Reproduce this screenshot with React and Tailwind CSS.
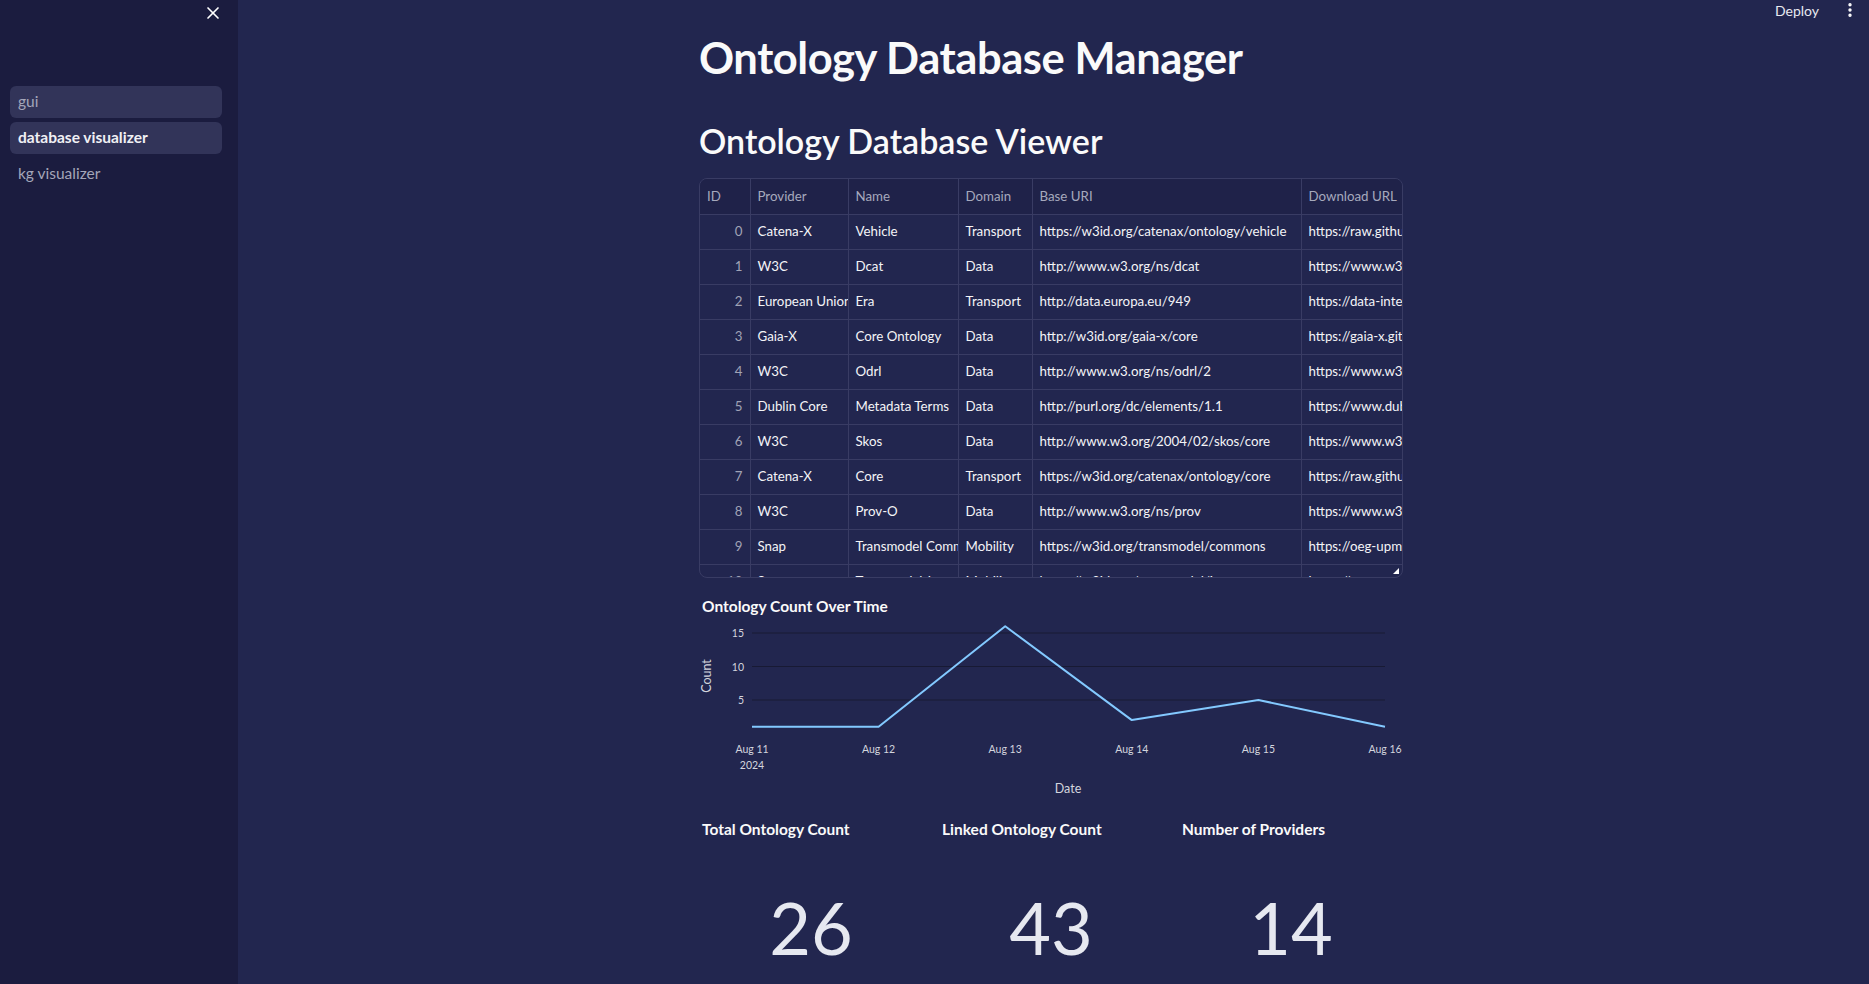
import { X, EllipsisVertical } from 'lucide-react'

const ROWS = [
  ['0', 'Catena-X', 'Vehicle', 'Transport', 'https://w3id.org/catenax/ontology/vehicle', 'https://raw.githubusercontent.com/catenax-eV/'],
  ['1', 'W3C', 'Dcat', 'Data', 'http://www.w3.org/ns/dcat', 'https://www.w3.org/ns/dcat3.ttl'],
  ['2', 'European Union', 'Era', 'Transport', 'http://data.europa.eu/949', 'https://data-interop.era.europa.eu/'],
  ['3', 'Gaia-X', 'Core Ontology', 'Data', 'http://w3id.org/gaia-x/core', 'https://gaia-x.gitlab.io/technical'],
  ['4', 'W3C', 'Odrl', 'Data', 'http://www.w3.org/ns/odrl/2', 'https://www.w3.org/ns/odrl/2/ODRL22.ttl'],
  ['5', 'Dublin Core', 'Metadata Terms', 'Data', 'http://purl.org/dc/elements/1.1', 'https://www.dublincore.org/specifications'],
  ['6', 'W3C', 'Skos', 'Data', 'http://www.w3.org/2004/02/skos/core', 'https://www.w3.org/2009/08/skos-reference'],
  ['7', 'Catena-X', 'Core', 'Transport', 'https://w3id.org/catenax/ontology/core', 'https://raw.githubusercontent.com/catenax-eV/'],
  ['8', 'W3C', 'Prov-O', 'Data', 'http://www.w3.org/ns/prov', 'https://www.w3.org/ns/prov-o'],
  ['9', 'Snap', 'Transmodel Commons', 'Mobility', 'https://w3id.org/transmodel/commons', 'https://oeg-upm.github.io/transmodel'],
  ['10', 'Snap', 'Transmodel Journeys', 'Mobility', 'https://w3id.org/transmodel/journeys', 'https://oeg-upm.github.io/transmodel'],
]

const COLS = ['ID', 'Provider', 'Name', 'Domain', 'Base URI', 'Download URL']
const WIDTHS = ['w-[50px]', 'w-[98px]', 'w-[110px]', 'w-[74px]', 'w-[269px]', 'w-[300px]']

const COUNTS = [1, 1, 16, 2, 5, 1]
const DAYS = ['Aug 11', 'Aug 12', 'Aug 13', 'Aug 14', 'Aug 15', 'Aug 16']

const font = "font-['Lato','Noto_Sans',sans-serif]"

// y axis: 0 sits at 114.5, 6.7px per unit; x: 53 → 686
const yOf = v => 114.5 - v * 6.7

function Chart() {
  const xs = COUNTS.map((_, i) => 53 + i * 126.6)
  const pts = xs.map((x, i) => `${x},${yOf(COUNTS[i])}`).join(' ')
  return (
    <svg width="704" height="180" viewBox="0 0 704 180" className="block">
      {[15, 10, 5].map(v => (
        <g key={v}>
          <line x1="53" x2="686" y1={yOf(v)} y2={yOf(v)} stroke="#181a34" strokeWidth="1" />
          <text x="45" y={yOf(v) + 4} textAnchor="end" fontSize="10.5" fill="#d3d5de">{v}</text>
        </g>
      ))}
      <polyline points={pts} fill="none" stroke="#83c9ff" strokeWidth="2" strokeLinejoin="round" />
      {DAYS.map((d, i) => (
        <text key={d} x={xs[i]} y="134" textAnchor="middle" fontSize="10.5" fill="#d3d5de">{d}</text>
      ))}
      <text x="53" y="150" textAnchor="middle" fontSize="10.5" fill="#d3d5de">2024</text>
      <text x="369" y="174" textAnchor="middle" fontSize="12.5" fill="#d3d5de">Date</text>
      <text x="0" y="0" transform="translate(12 57) rotate(-90)" textAnchor="middle" fontSize="12.5" fill="#d3d5de">Count</text>
    </svg>
  )
}

export default function App() {
  return (
    <div className={`flex h-[984px] w-full overflow-hidden bg-[#22264f] text-[#fafafa] ${font}`}>
      {/* sidebar */}
      <aside className="relative w-[238px] shrink-0 bg-[#1b1c3f]">
        <button className="absolute right-[15px] top-[3px] text-white">
          <X size={20} strokeWidth={2} />
        </button>
        <nav className="flex flex-col gap-[4px] pl-[10px] pr-[16px] pt-[86px]">
          <div className="flex h-[32px] items-center rounded-md bg-[#323459] px-[8px] text-[15.5px] text-[#a4a6b9]">gui</div>
          <div className="flex h-[32px] items-center rounded-md bg-[#323459] px-[8px] text-[15.5px] font-bold text-[#f0f0f4]">database visualizer</div>
          <div className="flex h-[32px] items-center px-[8px] text-[15.5px] text-[#a4a6b9]">kg visualizer</div>
        </nav>
      </aside>

      {/* main */}
      <main className="relative flex-1">
        <div className="absolute right-[10px] top-0 flex h-[20px] items-center gap-[22px] text-[14px]">
          <span className="text-[#e8e9f0]">Deploy</span>
          <EllipsisVertical size={18} strokeWidth={2.5} className="text-white" />
        </div>

        <div className="ml-[461px] w-[704px] pt-[31px]">
          <h1 className="text-[43.5px] font-bold leading-[1.2] tracking-[-0.01em]">Ontology Database Manager</h1>
          <h2 className="mt-[36px] text-[34px] font-semibold leading-[1.27]">Ontology Database Viewer</h2>

          {/* table */}
          <div className="relative mt-[16px] h-[400px] overflow-hidden rounded-lg border border-[#393c64]">
            <table className="w-[901px] table-fixed border-collapse text-[13.3px]">
              <thead>
                <tr className="h-[35px] bg-[#1f2249] text-[#a6a9bd]">
                  {COLS.map((c, i) => (
                    <th key={c} className={`${WIDTHS[i]} border-b border-r border-[#393c64] px-[7px] text-left font-normal whitespace-nowrap overflow-hidden`}>{c}</th>
                  ))}
                </tr>
              </thead>
              <tbody>
                {ROWS.map(r => (
                  <tr key={r[0]} className="h-[35px]">
                    {r.map((c, i) => (
                      <td key={i} className={`border-b border-r border-[#393c64] px-[7px] whitespace-nowrap overflow-hidden ${i === 0 ? 'text-right text-[#a0a3b6]' : 'text-[#f4f4f7]'}`}>{c}</td>
                    ))}
                  </tr>
                ))}
              </tbody>
            </table>
            <svg width="6" height="6" className="absolute bottom-[3px] right-[3px]">
              <polygon points="6,0 6,6 0,6" fill="#ffffff" />
            </svg>
          </div>

          {/* chart */}
          <div className="mt-[18px] pl-[3px] text-[15.5px] font-bold leading-[20px]">Ontology Count Over Time</div>
          <div className="mt-[3px]">
            <Chart />
          </div>

          {/* metrics */}
          <div className="mt-[20px] grid grid-cols-3 gap-x-[16px]">
            {[['Total Ontology Count', '26'], ['Linked Ontology Count', '43'], ['Number of Providers', '14']].map(([l, v]) => (
              <div key={l}>
                <div className="pl-[3px] text-[15.5px] font-bold leading-[20px] whitespace-nowrap">{l}</div>
                <div className="mt-[52px] text-center text-[72px] font-normal leading-none text-[#e6e8f0]">{v}</div>
              </div>
            ))}
          </div>
        </div>
      </main>
    </div>
  )
}
